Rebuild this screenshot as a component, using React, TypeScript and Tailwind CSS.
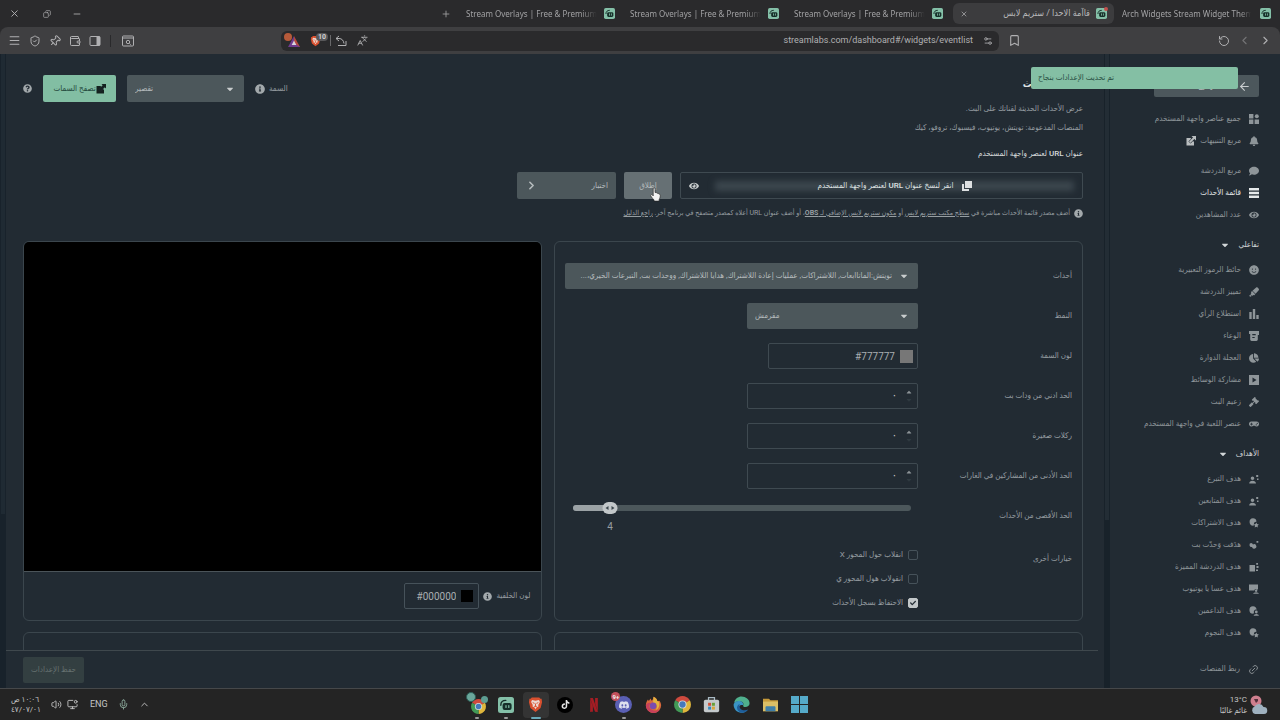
import React, { useState } from 'react';
import {
  FaBell, FaCaretDown, FaCaretUp, FaChartPie, FaCheck, FaComment, FaEye, FaGamepad, FaGavel,
  FaHighlighter, FaInfoCircle, FaQuestionCircle, FaSmile,
} from 'react-icons/fa';
import {
  ArrowLeft, Bookmark, ChevronLeft, ChevronRight, ChevronUp, Languages, Link2, Menu, Mic, Minus, MonitorDot,
  Pin, Plus, RotateCcw, Settings2, ShieldCheck, Volume2, Wallet, X, Copy,
} from 'lucide-react';
import { SiTiktok, SiNetflix, SiDiscord } from 'react-icons/si';

/* ---------- Drawings ---------- */

const StreamlabsLogo = ({ className = 'size-[11px]' }: { className?: string }) => (
  <svg viewBox="0 0 16 16" className={className}>
    <rect width="16" height="16" rx="2.5" fill="#84c0a8" />
    <path d="M2.8 8.2c0-3 2-4.8 5-4.8" fill="none" stroke="#16302a" strokeWidth="1.4" strokeLinecap="round" />
    <rect x="4.6" y="6" width="9" height="7" rx="2" fill="#16302a" />
    <path d="M8 8.5v2M10.8 8.5v2" stroke="#84c0a8" strokeWidth="1.2" strokeLinecap="round" />
  </svg>
);

const BraveLogo = ({ className }: { className: string }) => (
  <svg viewBox="0 0 16 18" className={className}>
    <path d="M4 1.5h8l1.2 1.4 1.3 0 .5 3.6-1.6 6.3L8 17l-5.4-4.2L1 6.5l.5-3.6h1.3z" fill="#d9502f" />
    <path d="M4.3 4.2 8 5l3.7-.8 1 2.2-1.8 3 .3 1.6-2 1L8 14l-1.2-2-2-1 .3-1.6-1.8-3z" fill="#ead9d3" />
    <path d="m5 7 2 .8M11 7l-2 .8M8 8v3M6.6 11h2.8" stroke="#d9502f" strokeWidth="1" />
  </svg>
);

const ChromeLogo = ({ className }: { className: string }) => (
  <svg viewBox="0 0 20 20" className={className}>
    <path d="M10 10 1.4 5A10 10 0 0 1 18.6 5z" fill="#cf4a3e" />
    <path d="M10 10 18.6 5A10 10 0 0 1 10 20z" fill="#dfb63c" />
    <path d="M10 10v10A10 10 0 0 1 1.4 5z" fill="#429a56" />
    <circle cx="10" cy="10" r="4.8" fill="#d8dcd9" />
    <circle cx="10" cy="10" r="3.7" fill="#4479bd" />
  </svg>
);

const FirefoxLogo = () => (
  <svg viewBox="0 0 20 20" className="size-[17px]">
    <path d="M17 5.5c1 1.4 2 3.4 2 5.5A9 9 0 0 1 1 11c0-3 1-5 2.5-7l1 2 2-3L8 5.500c1-.8 2-2.500 2-4.500 3 1 4 3 4.500 5z" fill="#d8693b" />
    <path d="M10 1c3 1.5 4 3 4.5 5l2 1c1 4 0 8-4 9.5 3-4 1-8-3-8.500 0-2 .5-4 .5-7z" fill="#e3b23e" />
    <circle cx="9.5" cy="11.5" r="4" fill="#7a4bb0" />
    <path d="M1 11c0 5 4 9 9 9 3 0 6-1.500 7.500-4-4 2-9 2-11.500-1.500C4 12 5 9 8 8.500 5 7 2 8 1 11z" fill="#c8405c" />
  </svg>
);

const EdgeLogo = () => (
  <svg viewBox="0 0 20 20" className="size-[17px]">
    <path d="M1.2 8C2.500 3 6 .5 10 .5c5 0 9.500 3.500 9.500 8 0 3-2.500 4.500-5 4.500-2 0-3-.8-2.500-1.800C13 8 11 6.500 8.500 6.500 5 6.500 2.500 7 1.200 8z" fill="#4fb08d" />
    <path d="M.8 9.500C2 6.500 5 5.500 8 6c3 .5 4.500 2.500 4 5-3-1.500-6 1-5 4 1 2.800 5 4 9.500 2-2 2-4 2.800-6.500 2.800C4.500 19.800.2 15 .8 9.500z" fill="#3a94c4" />
    <path d="M8 9.500c-2.500 1-4 3.500-3 6.200 1 2.500 3.500 4 6 4 2.800 0 5.500-1.500 7-3.700-4 1.500-8.500 1-9.800-2C7.500 12.500 7.300 10.800 8 9.500z" fill="#1f5f9c" />
  </svg>
);

const StoreLogo = () => (
  <svg viewBox="0 0 20 20" className="size-[17px]">
    <path d="M6.5 5V2h7v3" fill="none" stroke="#a9bac4" strokeWidth="1.5" />
    <rect x="1" y="4.5" width="18" height="14.5" rx="2" fill="#c4c9cb" />
    <path d="M6 8h3.5v3.5H6z" fill="#cf4e37" />
    <path d="M10.5 8H14v3.5h-3.5z" fill="#67a037" />
    <path d="M6 12.5h3.5V16H6z" fill="#3488bd" />
    <path d="M10.5 12.5H14V16h-3.5z" fill="#d9a63a" />
  </svg>
);

const FolderLogo = () => (
  <svg viewBox="0 0 20 18" className="h-[15px] w-[17px]">
    <path d="M1 2h7l2 2h9v13H1z" fill="#c79a3a" />
    <path d="M1 5.5h18V17H1z" fill="#dcbf66" />
    <path d="M4 12.5c0-1 .5-1.5 1.5-1.5h9c1 0 1.5.5 1.5 1.5V17H4z" fill="#3f7fa8" />
  </svg>
);

const WindowsLogo = () => (
  <svg viewBox="0 0 17 17" className="size-[17px]">
    <path d="M0 0h8v8H0zM9 0h8v8H9zM0 9h8v8H0zM9 9h8v8H9z" fill="#55aac9" />
  </svg>
);

const ExternalLink = ({ className }: { className: string }) => (
  <svg viewBox="0 0 10 10" className={`size-[10px] ${className}`}>
    <path d="M4.500 2H.5v7.500H8V6" fill="currentColor" />
    <path d="M3.500 6.500 8 2" stroke="#222b33" strokeWidth="3" />
    <path d="M5.500 0H10v4.500L8.400 3 4.300 7 3 5.700 7 1.600z" fill="currentColor" />
  </svg>
);

const Widgets = () => (
  <svg viewBox="0 0 10 10" className="size-[10px]" fill="currentColor">
    <path d="M0 0h4.400v4.400H0zM0 5.600h4.400V10H0zM5.600 5.600H10V10H5.600z" />
    <circle cx="7.8" cy="2.2" r="2" />
  </svg>
);

const Rows = () => (
  <svg viewBox="0 0 10 10" className="size-[10px]" fill="currentColor">
    <path d="M0 0h10v2.600H0zM0 3.700h10v2.600H0zM0 7.400h10V10H0z" />
  </svg>
);

const Bars = () => (
  <svg viewBox="0 0 10 10" className="size-[10px]" fill="currentColor">
    <path d="M.3 3h2.400v7H.3zM3.800 0h2.400v10H3.800zM7.300 6h2.400v4H7.300z" />
  </svg>
);

const Jar = () => (
  <svg viewBox="0 0 10 10" className="size-[10px]" fill="currentColor">
    <path d="M0 0h10v4H8.800v4.600q0 1.400-1.400 1.400H2.600Q1.200 10 1.200 8.600V3H0zM3.300 3v1.200h3.400V3zM3.300 6v1h2.400V6z" fillRule="evenodd" />
  </svg>
);

const PlayBox = () => (
  <svg viewBox="0 0 10 10" className="size-[10px]" fill="currentColor">
    <path d="M0 0h10v10H0zM3.500 2.500v5L7.500 5z" fillRule="evenodd" />
  </svg>
);

type GoalKind = 'user' | 'star' | 'bits' | 'card' | 'screen' | 'member';

const GoalIcon = ({ kind }: { kind: GoalKind }) => (
  <svg viewBox="0 0 10 10" className="size-[10px]" fill="currentColor">
    {kind === 'user' && <path d="M3.500 2.500a1.800 1.800 0 1 1 0 3.600 1.800 1.800 0 0 1 0-3.600zM.2 9.600Q.4 6.800 3.500 6.800T7 9.600zM7.200 1h2v2h-2zM8 4.500h1.500V6H8z" />}
    {kind === 'star' && <path d="M4 .3a3.700 3.700 0 0 1 3.500 3.200L5.200 4.400 4.600 7.700A3.700 3.700 0 1 1 4 .3zM7.300 4.500l.8 1.600 1.800.3-1.300 1.300.3 1.900-1.600-.9-1.600.9.3-1.900L4.800 6.400l1.700-.3z" />}
    {kind === 'member' && <path d="M4 .3a3.700 3.700 0 0 1 3.600 3.400A2.200 2.200 0 0 0 5 6.800L4.300 7.700A3.700 3.700 0 1 1 4 .3zM7.300 4.600a1.400 1.400 0 1 1 0 2.800 1.400 1.400 0 0 1 0-2.800zM4.500 9.800q.4-1.900 2.800-1.900t2.700 1.900z" />}
    {kind === 'bits' && <path d="M2 3a2 2 0 0 1 2 1.500 2.200 2.200 0 1 1-1 2.400A2 2 0 1 1 2 3zM7.500 1h1.800v1.800H7.500z" />}
    {kind === 'card' && <path d="M.5 3h5.500v6.500H.5zM7.200 1h1.800v1.800H7.200zM7.500 4h2v2h-2zM7 7.500h2v1.500H7z" />}
    {kind === 'screen' && <path d="M0 .5h9v5H7.700a1.600 1.600 0 0 0-2.500 1H0zM6.500 5.800a1.200 1.200 0 1 1 0 2 1.200 1.200 0 0 1 0-2zM4 9.800q.4-1.500 3-1.500t3 1.500z" />}
  </svg>
);

const HandCursor = () => (
  <svg viewBox="0 0 12 16" className="pointer-events-none absolute top-[15px] left-[26px] z-10 h-[15px] w-[11px]">
    <path
      d="M3.500 1.800c0-1.500 2-1.500 2 0v4l1 .1c.9 0 1.300.4 1.500.8.8-.2 1.400.1 1.600.8.9-.1 1.600.4 1.600 1.300 0 2.800-.7 3.700-1.200 4.700v1.700H4.400v-1.400C3 12.700 1.500 11 .8 9.400c-.4-1 .7-1.700 1.600-1l1.100 1.100z"
      fill="#f2f2f2"
      stroke="#222"
      strokeWidth=".7"
    />
  </svg>
);

/* ---------- Data ---------- */

interface NavItem {
  label: string;
  icon: React.ReactNode;
  active?: boolean;
  external?: boolean;
}

interface NavGroup {
  title?: string;
  items: NavItem[];
}

const NAV_GROUPS: NavGroup[] = [
  {
    items: [
      { label: 'جميع عناصر واجهة المستخدم', icon: <Widgets /> },
      { label: 'مربع التنبيهات', icon: <FaBell />, external: true },
    ],
  },
  {
    items: [
      { label: 'مربع الدردشة', icon: <FaComment /> },
      { label: 'قائمة الأحداث', icon: <Rows />, active: true },
      { label: 'عدد المشاهدين', icon: <FaEye /> },
    ],
  },
  {
    title: 'تفاعلي',
    items: [
      { label: 'حائط الرموز التعبيرية', icon: <FaSmile /> },
      { label: 'تمييز الدردشة', icon: <FaHighlighter /> },
      { label: 'استطلاع الرأي', icon: <Bars /> },
      { label: 'الوعاء', icon: <Jar /> },
      { label: 'العجلة الدوارة', icon: <FaChartPie /> },
      { label: 'مشاركة الوسائط', icon: <PlayBox /> },
      { label: 'زعيم البث', icon: <FaGavel /> },
      { label: 'عنصر اللعبة في واجهة المستخدم', icon: <FaGamepad /> },
    ],
  },
  {
    title: 'الأهداف',
    items: [
      { label: 'هدف التبرع', icon: <GoalIcon kind="user" /> },
      { label: 'هدف المتابعين', icon: <GoalIcon kind="user" /> },
      { label: 'هدف الاشتراكات', icon: <GoalIcon kind="star" /> },
      { label: 'هدَفت وَحدّت بت', icon: <GoalIcon kind="bits" /> },
      { label: 'هدف الدردشة المميزة', icon: <GoalIcon kind="card" /> },
      { label: 'هدف عسا يا يوتيوب', icon: <GoalIcon kind="screen" /> },
      { label: 'هدف الداعمين', icon: <GoalIcon kind="member" /> },
      { label: 'هدف النجوم', icon: <GoalIcon kind="star" /> },
    ],
  },
];

const NUMBER_FIELDS = [
  { id: 'min-bits', label: 'الحد ادني من ودات بت' },
  { id: 'kicks', label: 'ركلات صغيرة' },
  { id: 'min-raid', label: 'الحد الأدنى من المشاركين في الغارات' },
];

const OPTIONS = [
  { id: 'flip-x', label: 'انقلاب حول المحور X', checked: false },
  { id: 'flip-y', label: 'انقولاب هول المحور ي', checked: false },
  { id: 'keep-history', label: 'الاحتفاظ بسجل الأحداث', checked: true },
];

/* ---------- Browser ---------- */

const TitleBar = () => (
  <div dir="ltr" className="flex h-[27px] shrink-0 items-center bg-[#2a2a2c] text-[#a2a2a4]">
    <div className="flex items-center gap-5 pl-[9px] text-[#b4b4b6]">
      <button aria-label="Close" className="mr-px"><X size={11} /></button>
      <button aria-label="Restore" className="flex w-[11px] justify-center"><Copy size={8} className="-scale-x-100" /></button>
      <button aria-label="Minimize"><Minus size={10} /></button>
    </div>
    <button aria-label="New tab" className="mr-[10px] ml-auto"><Plus size={10} /></button>
    {[0, 1, 2].map((i) => (
      <button key={i} className="flex w-[164px] items-center gap-[7px] pl-[5px]">
        <span className="w-[131px] text-left font-['Noto_Sans',sans-serif] whitespace-nowrap [mask-image:linear-gradient(to_right,black_88%,transparent)]">
          Stream Overlays | Free &amp; Premium O
        </span>
        <StreamlabsLogo />
      </button>
    ))}
    <div className="flex h-[21px] w-[161px] items-center rounded-md bg-[#3c3c3e] px-[7px] text-[#b9b9bb]">
      <button aria-label="Close tab"><X size={8} /></button>
      <span dir="rtl" className="flex-1 pr-1.5 text-[9px]">قاآمة الاحدا / ستريم لابس</span>
      <span className="relative">
        <StreamlabsLogo />
        <i className="absolute -top-px -right-px size-1 rounded-full bg-[#c0504d]" />
      </span>
    </div>
    <button className="flex w-[166px] items-center gap-[9px] pl-2">
      <span className="w-[129px] text-left font-['Noto_Sans',sans-serif] whitespace-nowrap [mask-image:linear-gradient(to_right,black_92%,transparent)]">
        Arch Widgets Stream Widget Theme
      </span>
      <StreamlabsLogo />
    </button>
  </div>
);

const Toolbar = () => (
  <div dir="ltr" className="flex h-[27px] shrink-0 items-center rounded-t-lg bg-[#3f3f41] text-[#b0b0b2]">
    <div className="flex items-center gap-2 pl-2">
      <button aria-label="Menu"><Menu size={13} /></button>
      <button aria-label="Shield"><ShieldCheck size={12} /></button>
      <button aria-label="Pin"><Pin size={12} className="rotate-45" /></button>
      <button aria-label="Wallet"><Wallet size={12} /></button>
      <button aria-label="Side panel">
        <svg viewBox="0 0 12 12" className="size-3">
          <rect x="1" y="1.5" width="10" height="9" rx="1" fill="none" stroke="currentColor" />
          <path d="M7.500 1.500H11v9H7.500z" fill="currentColor" />
        </svg>
      </button>
      <i className="mx-px h-3 w-px bg-[#29292b]" />
      <button aria-label="Search tabs" className="ml-0.5">
        <svg viewBox="0 0 12 12" className="size-3" fill="none" stroke="currentColor">
          <rect x=".5" y="1" width="11" height="10" rx="1" />
          <path d="M.5 3h11M7.500 8.500l1.200 1.200" />
          <circle cx="6" cy="7" r="1.7" />
        </svg>
      </button>
    </div>
    <div className="ml-[147px] flex h-5 flex-1 items-center rounded-md bg-[#2a2a2c] pr-1.5">
      <span className="relative ml-[3px] h-4 w-6">
        <svg viewBox="0 0 12 11" className="absolute bottom-0.5 left-1 h-[11px] w-3">
          <path d="M6 0 12 11H6z" fill="#b5483d" />
          <path d="M6 0 0 11h12L6 7z" fill="#6e3b8e" />
          <path d="M6 4.500 8.300 9H3.700z" fill="#d9d3dd" />
        </svg>
        <i className="absolute top-0 left-0 size-2 rounded-full bg-[#b65a3a]" />
      </span>
      <span className="relative h-4 w-[22px]">
        <BraveLogo className="absolute bottom-0.5 left-0.5 h-3 w-[11px]" />
        <b className="absolute top-0 left-2 rounded bg-[#58585a] px-0.5 text-[7px] leading-2 text-[#cfcfd1]">10</b>
      </span>
      <i className="h-[11px] w-px bg-[#68686a]" />
      <button aria-label="Share" className="ml-1">
        <svg viewBox="0 0 12 12" className="size-3" fill="none" stroke="currentColor">
          <path d="M4 1 1 3.500 4 6M1 3.500h3c3 0 4.500 2 5 5M3 10.500h8V6" />
        </svg>
      </button>
      <button aria-label="Translate" className="ml-2.5"><Languages size={11} className="-scale-x-100" /></button>
      <span className="ml-auto text-[9px]">streamlabs.com/dashboard#/widgets/eventlist</span>
      <button aria-label="Site settings" className="ml-2.5"><Settings2 size={10} /></button>
    </div>
    <button aria-label="Bookmark" className="ml-[9px]"><Bookmark size={13} /></button>
    <div className="flex items-center gap-2 pr-2 pl-[197px]">
      <button aria-label="Reload"><RotateCcw size={12} /></button>
      <button aria-label="Back" className="text-[#747476]"><ChevronLeft size={13} /></button>
      <button aria-label="Forward"><ChevronRight size={13} /></button>
    </div>
  </div>
);

/* ---------- Page ---------- */

const Sidebar = () => (
  <nav className="flex w-[170px] shrink-0 flex-col pt-[21px] pr-[21px] pb-2 text-[#8e9599]">
    <button className="flex h-[22px] w-[105px] items-center gap-6 rounded-xs bg-[#4c575c] pr-2 text-[#c9cdcf]">
      <ArrowLeft size={13} />
      <span>رجوع</span>
    </button>
    <div className="mt-[11px] flex flex-col gap-2">
      {NAV_GROUPS.map((group, i) => (
        <div key={i}>
          {group.title && (
            <button className="mb-[3px] flex h-[22px] items-center gap-2 font-medium text-[#d2d6d8]">
              {group.title}
              <FaCaretDown size={10} />
            </button>
          )}
          {group.items.map((item) => (
            <a
              key={item.label}
              href="#"
              className={`flex h-[22px] items-center gap-2 whitespace-nowrap ${item.active ? 'font-medium text-[#e6e9ea]' : ''}`}
            >
              <span className="flex w-[10px] justify-center text-[10px]">{item.icon}</span>
              {item.label}
              {item.external && <ExternalLink className="-mr-1 text-[#b9bdbf]" />}
            </a>
          ))}
        </div>
      ))}
    </div>
    <a href="#" className="mt-auto flex h-[22px] items-center gap-2">
      <Link2 size={11} className="-rotate-45" />
      ربط المنصات
    </a>
  </nav>
);

const Row = ({ label, htmlFor, children }: { label: string; htmlFor?: string; children: React.ReactNode }) => (
  <div className="flex items-start">
    <label htmlFor={htmlFor} className="flex h-[26px] w-[154px] shrink-0 items-center">{label}</label>
    <div className="min-w-0 flex-1">{children}</div>
  </div>
);

const EventSettings = () => {
  const [limit, setLimit] = useState(4);
  const percent = ((limit - 1) / 27) * 100;

  return (
    <section className="flex h-[380px] flex-col gap-[14px] rounded-md border border-[#3b464d] px-[10px] pt-[21px]">
      <Row label="أحداث" htmlFor="events">
        <div className="relative">
          <select id="events" className="h-[26px] w-full appearance-none truncate rounded-xs bg-[#4c575b] pr-[26px] pl-2 text-[#b5bbbd]">
            <option>تويتش:الماتاابعات, اللاشتراكات, عمليات إعادة اللاشتراك, هدايا اللاشتراك, ووحدات بت, التبرعات الخيري،...</option>
          </select>
          <FaCaretDown className="pointer-events-none absolute top-2 right-[9px] text-[10px] text-[#c8cccd]" />
        </div>
      </Row>
      <Row label="النمط" htmlFor="style">
        <div className="relative w-[171px]">
          <select id="style" dir="ltr" className="h-[26px] w-full appearance-none rounded-xs bg-[#4c575b] px-2 text-[#b5bbbd]">
            <option>مقرمش</option>
          </select>
          <FaCaretDown className="pointer-events-none absolute top-2 right-[9px] text-[10px] text-[#c8cccd]" />
        </div>
      </Row>
      <Row label="لون السمة" htmlFor="theme-color">
        <div className="flex h-[26px] w-[150px] items-center gap-[5px] rounded-xs border border-[#3f4a51] px-1">
          <i className="size-[13px] shrink-0 bg-[#777]" />
          <input id="theme-color" dir="ltr" defaultValue="#777777" className="min-w-0 flex-1 bg-transparent text-right text-[10px] text-[#a9aeb1]" />
        </div>
      </Row>
      {NUMBER_FIELDS.map((field) => (
        <Row key={field.id} label={field.label} htmlFor={field.id}>
          <div className="flex h-[26px] w-[171px] items-center gap-2 rounded-xs border border-[#3f4a51] pr-1">
            <span className="flex flex-col items-center text-[8px] text-[#8e9599]">
              <FaCaretUp />
              <FaCaretDown className="text-[#2f3a41]" />
            </span>
            <input id={field.id} inputMode="numeric" defaultValue="٠" className="min-w-0 flex-1 bg-transparent text-[11px] text-[#c8cccd]" />
          </div>
        </Row>
      ))}
      <Row label="الحد الأقصى من الأحداث" htmlFor="limit">
        <div dir="ltr" className="relative mr-[7px] ml-2 h-[26px] pt-0.5">
          <div className="h-[6px] rounded-full bg-[#4c575b]">
            <div className="h-full rounded-full bg-[#9ba2a5]" style={{ width: `${percent}%` }} />
          </div>
          <div className="pointer-events-none absolute -top-px w-[15px] -translate-x-1/2 text-center text-[10px]" style={{ left: `${percent}%` }}>
            <div className="mb-[5px] flex h-3 items-center justify-center gap-[3px] rounded-md bg-[#c2c7c9]">
              <i className="border-y-2 border-r-3 border-y-transparent border-r-[#3b464d]" />
              <i className="border-y-2 border-l-3 border-y-transparent border-l-[#3b464d]" />
            </div>
            {limit}
          </div>
          <input
            id="limit"
            type="range"
            min={1}
            max={28}
            value={limit}
            onChange={(e) => setLimit(Number(e.target.value))}
            className="absolute inset-x-0 top-0 h-3 w-full opacity-0"
          />
        </div>
      </Row>
      <div className="flex">
        <span className="w-[154px] shrink-0 pt-[10px]">خيارات أخرى</span>
        <div>
          {OPTIONS.map((option) => (
            <label key={option.id} htmlFor={option.id} className="flex h-6 items-center gap-[5px]">
              <span className="relative flex size-[10px]">
                <input
                  id={option.id}
                  type="checkbox"
                  defaultChecked={option.checked}
                  className="peer size-[10px] appearance-none rounded-xs border border-[#46525a] checked:border-[#c2c7c9] checked:bg-[#c2c7c9]"
                />
                <FaCheck className="pointer-events-none absolute inset-0.5 hidden text-[6px] text-[#222b33] peer-checked:block" />
              </span>
              {option.label}
            </label>
          ))}
        </div>
      </div>
    </section>
  );
};

const Preview = () => (
  <section className="flex h-[380px] flex-col overflow-hidden rounded-md border border-[#3b464d]">
    <div className="flex-1 bg-black" />
    <div className="flex h-[49px] items-center gap-1 border-t border-[#4b5459] pr-[10px]">
      <label htmlFor="bg-color">لون الخلفية</label>
      <FaInfoCircle size={9} className="text-[#a3a9ac]" />
      <div className="flex h-[26px] w-[75px] items-center gap-[5px] rounded-xs border border-[#46525a] px-[5px]">
        <i className="size-3 shrink-0 bg-black" />
        <input id="bg-color" dir="ltr" defaultValue="#000000" className="min-w-0 flex-1 bg-transparent text-right text-[10px] text-[#a9aeb1]" />
      </div>
    </div>
  </section>
);

const Main = () => (
  <main className="flex min-w-0 flex-1 flex-col">
    <div className="min-h-0 flex-1 overflow-hidden pt-[21px] pr-[21px] pl-[17px]">
      <div className="flex h-[27px] items-center">
        <h1 className="ml-auto pb-2.5 text-[10px] font-bold text-[#dfe2e3]">قائمة الأحداث</h1>
        <label htmlFor="theme" className="ml-1">السمة</label>
        <FaInfoCircle size={10} className="text-[#a3a9ac]" />
        <div className="relative mr-[11px] w-[117px]">
          <select id="theme" dir="ltr" className="h-[27px] w-full appearance-none rounded-xs bg-[#4c575b] px-2 text-[#b5bbbd]">
            <option>تقصير</option>
          </select>
          <FaCaretDown className="pointer-events-none absolute top-[9px] right-[9px] text-[10px] text-[#c8cccd]" />
        </div>
        <button className="mx-[11px] flex h-[27px] w-[73px] items-center justify-center rounded-xs bg-[#82bea3] text-[#24483d]">
          <ExternalLink className="text-[#14221f]" />
          تصفح السمات
        </button>
        <FaQuestionCircle size={9} className="text-[#a3a9ac]" />
      </div>
      <p className="leading-[14px]">عرض الأحداث الحديثة لقناتك على البث.</p>
      <p className="mt-[5px] leading-[14px]">المنصات المدعومة: تويتش، يوتيوب، فيسبوك، تروفو، كيك</p>
      <h2 className="mt-3 leading-[14px] font-medium text-[#d6dadb]">عنوان URL لعنصر واجهة المستخدم</h2>
      <div className="mt-[11px] flex h-[27px] gap-2">
        <div className="flex w-[403px] items-center rounded-xs border border-[#3f4a51] px-2">
          <button className="relative flex h-full flex-1 items-center justify-center gap-2 font-medium text-[#dde0e1]">
            <span className="absolute inset-x-0 top-2 h-[10px] bg-[#3c474e] blur-[3px]" />
            <svg viewBox="0 0 10 10" className="relative size-[10px]" fill="currentColor">
              <path d="M3 0h7v7H3zM0 3h2v5h5v2H0z" />
            </svg>
            <span className="relative">انقر لنسخ عنوان URL لعنصر واجهة المستخدم</span>
          </button>
          <button aria-label="إظهار" className="mr-4 text-[#c8cccd]"><FaEye size={10} /></button>
        </div>
        <button className="relative w-12 rounded-xs bg-[#667074] text-[#b5bbbd]">
          إطلاق
          <HandCursor />
        </button>
        <button className="flex w-[99px] items-center justify-between rounded-xs bg-[#4c575b] px-2 text-[#b5bbbd]">
          اختبار
          <ChevronRight size={13} strokeWidth={3} />
        </button>
      </div>
      <p className="mt-[7px] flex items-center gap-1 text-[7px] leading-[14px] whitespace-nowrap">
        <FaInfoCircle size={9} className="text-[#a3a9ac]" />
        <span>
          أضف مصدر قائمة الأحداث مباشرة في <a href="#" className="underline">سطح مكتب ستريم لابس</a> أو{' '}
          <a href="#" className="underline">مكون ستريم لابس الإضافي لـ <b>OBS</b></a>، أو أضف عنوان URL أعلاه كمصدر متصفح في برنامج آخر.{' '}
          <a href="#" className="underline">راجع الدليل</a>
        </span>
      </p>
      <div className="mt-[21px] grid grid-cols-[529fr_518fr] gap-x-3 gap-y-[11px]">
        <EventSettings />
        <Preview />
        <section className="h-24 rounded-md border border-[#3b464d]" />
        <section className="h-24 rounded-md border border-[#3b464d]" />
      </div>
    </div>
    <footer className="mr-1.5 flex h-[38px] shrink-0 items-center justify-end border-t border-[#3f484d] pl-[17px]">
      <button className="h-[26px] w-[61px] rounded-xs bg-[#333f41] text-[#667170]">حفظ الإعدادات</button>
    </footer>
  </main>
);

/* ---------- Taskbar ---------- */

const APPS: { name: string; logo: React.ReactNode; open?: boolean; active?: boolean }[] = [
  {
    name: 'Chrome profile',
    logo: (
      <span className="relative size-[18px]">
        <ChromeLogo className="absolute right-0 bottom-0 size-[15px]" />
        <i className="absolute -top-1 -left-0.5 size-[10px] rounded-full border border-[#2d5f58] bg-[#6aa79b]" />
        <i className="absolute top-0 -right-0.5 size-[7px] rounded-full bg-[#5d9d91]" />
      </span>
    ),
    open: true,
  },
  { name: 'Streamlabs', logo: <StreamlabsLogo className="size-4" />, open: true },
  { name: 'Brave', logo: <BraveLogo className="h-[17px] w-[15px]" />, active: true },
  { name: 'TikTok', logo: <span className="flex size-4 items-center justify-center rounded-full bg-black text-[9px] text-[#e4e4e4]"><SiTiktok /></span> },
  { name: 'Netflix', logo: <SiNetflix className="text-[14px] text-[#a51d24]" /> },
  {
    name: 'Discord',
    logo: (
      <span className="relative flex size-[17px] items-center justify-center rounded-full bg-[#5a5fb4] text-[10px] text-[#dedfee]">
        <SiDiscord />
        <b className="absolute -top-1 -left-1 flex size-[9px] items-center justify-center rounded-full bg-[#c2505c] text-[6px] text-[#eee]">9+</b>
      </span>
    ),
    open: true,
  },
  { name: 'Firefox', logo: <FirefoxLogo /> },
  { name: 'Chrome', logo: <ChromeLogo className="size-[17px]" /> },
  { name: 'Store', logo: <StoreLogo /> },
  { name: 'Edge', logo: <EdgeLogo /> },
  { name: 'Files', logo: <FolderLogo /> },
  { name: 'Start', logo: <WindowsLogo /> },
];

const Taskbar = () => (
  <div dir="ltr" className="grid h-8 shrink-0 grid-cols-[1fr_auto_1fr] items-center border-t border-[#46484a] bg-[#242424] text-[9px] text-[#c4c4c4]">
    <div className="flex items-center pl-[11px]">
      <div className="w-[28px] text-right text-[8px] leading-[10px] whitespace-nowrap">
        <div dir="rtl" className="text-right">١٠:٠٦ ص</div>
        <div>٤٧/٠٧/٠١</div>
      </div>
      <Volume2 size={11} className="ml-3" />
      <MonitorDot size={11} className="ml-[5px]" />
      <span className="ml-3">ENG</span>
      <Mic size={11} className="ml-[10px] text-[#8fae9f]" />
      <ChevronUp size={11} className="ml-[10px]" />
    </div>
    <div className="mr-[3px] flex h-full w-[349px] items-center justify-between">
      {APPS.map((app) => (
        <button
          key={app.name}
          aria-label={app.name}
          className={`relative flex h-[26px] w-[26px] items-center justify-center rounded ${app.active ? 'bg-[#343434]' : ''}`}
        >
          {app.logo}
          {app.open && <i className="absolute -bottom-px h-0.5 w-1 rounded bg-[#9a9a9a]" />}
          {app.active && <i className="absolute -bottom-px h-0.5 w-2.5 rounded bg-[#69a9b9]" />}
        </button>
      ))}
    </div>
    <div className="flex items-center justify-end gap-[3px] pr-3">
      <div className="text-right text-[8px] leading-[11px]">
        <div>13°C</div>
        <div dir="rtl">غائم غالبًا</div>
      </div>
      <svg viewBox="0 0 18 20" className="h-5 w-[18px]">
        <circle cx="6" cy="6" r="5.5" fill="#cf7f8e" />
        <path d="M4 4h4v2L6 8z" fill="#54313d" />
        <path d="M5 19a4 4 0 0 1-.5-7.500A5 5 0 0 1 13.500 12 3.500 3.500 0 0 1 14 19z" fill="#9fb1bf" />
      </svg>
    </div>
  </div>
);

export default function App() {
  return (
    <div className="flex h-screen flex-col overflow-hidden bg-[#2a2a2c] font-[Roboto,'DejaVu_Sans_Condensed','DejaVu_Sans',sans-serif] text-[8px] text-[#969da1]">
      <TitleBar />
      <Toolbar />
      <div dir="rtl" className="relative flex min-h-0 flex-1 bg-[#222b33]">
        <Sidebar />
        <div className="w-[6px] shrink-0 bg-[#18222a]">
          <div className="mx-px h-[466px] bg-[#232d35]" />
        </div>
        <Main />
        <div className="w-[6px] shrink-0 bg-[#18222b]">
          <div className="mx-px h-[460px] bg-[#1f2a33]" />
        </div>
        <div role="status" className="absolute top-[13px] right-[42px] h-[22px] w-[207px] rounded-xs bg-[#84bfa4] px-[7px] pt-1 text-left leading-[13px] text-[#2a5144]">
          تم تحديث الإعدادات بنجاح
        </div>
      </div>
      <Taskbar />
    </div>
  );
}
